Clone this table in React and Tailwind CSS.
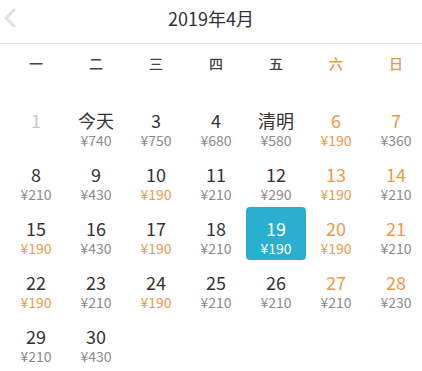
import React from 'react';

const ORANGE = 'text-[#eb9a4c]';

const days = [
  { d: '1', disabled: true },
  { d: '今天', p: 740 },
  { d: '3', p: 750 },
  { d: '4', p: 680 },
  { d: '清明', p: 580 },
  { d: '6', p: 190 },
  { d: '7', p: 360 },
  { d: '8', p: 210 },
  { d: '9', p: 430 },
  { d: '10', p: 190 },
  { d: '11', p: 210 },
  { d: '12', p: 290 },
  { d: '13', p: 190 },
  { d: '14', p: 210 },
  { d: '15', p: 190 },
  { d: '16', p: 430 },
  { d: '17', p: 190 },
  { d: '18', p: 210 },
  { d: '19', p: 190, selected: true },
  { d: '20', p: 190 },
  { d: '21', p: 210 },
  { d: '22', p: 190 },
  { d: '23', p: 210 },
  { d: '24', p: 190 },
  { d: '25', p: 210 },
  { d: '26', p: 210 },
  { d: '27', p: 210 },
  { d: '28', p: 230 },
  { d: '29', p: 210 },
  { d: '30', p: 430 },
];

const weekdays = ['一', '二', '三', '四', '五', '六', '日'];

const DayCell = ({ day, index }) => {
  const weekend = index % 7 >= 5;
  if (day.selected) {
    return (
      <div className="h-[53px] rounded-[4px] bg-[#2aafd1] flex flex-col items-center pt-[10px] text-white">
        <span className="text-[18px] leading-[22px]">{day.d}</span>
        <span className="text-[14px] leading-[18px]">¥{day.p}</span>
      </div>
    );
  }
  const numColor = day.disabled ? 'text-[#c8c8c8]' : weekend ? ORANGE : 'text-[#333333]';
  const priceColor = day.p === 190 ? ORANGE : 'text-[#8a8a8a]';
  return (
    <div className="h-[53px] flex flex-col items-center pt-[10px]">
      <span className={`text-[18px] leading-[22px] ${numColor}`}>{day.d}</span>
      {day.p && <span className={`text-[14px] leading-[18px] ${priceColor}`}>¥{day.p}</span>}
    </div>
  );
};

export default function App() {
  return (
    <div
      className="w-[422px] h-[371px] bg-white overflow-hidden"
      style={{ fontFamily: '"Noto Sans CJK SC", sans-serif' }}
    >
      {/* Header */}
      <div className="relative h-[44px] border-b border-[#e3e3e3] flex items-center justify-center">
        <svg className="absolute left-[2px] top-[7px]" width="16" height="22" viewBox="0 0 16 22">
          <polyline points="13,2 4,11 13,20" fill="none" stroke="#e2e2e2" strokeWidth="3" />
        </svg>
        <span className="text-[18px] text-[#333333] leading-none -mt-[7px]">2019年4月</span>
      </div>

      {/* Weekdays */}
      <div className="pl-[6px] grid grid-cols-[repeat(7,60px)] h-[38px] items-center">
        {weekdays.map((w, i) => (
          <div
            key={w}
            className={`text-center text-[14px] font-medium leading-none ${i >= 5 ? 'text-[#e39a46]' : 'text-[#444444]'}`}
          >
            {w}
          </div>
        ))}
      </div>

      {/* Days */}
      <div className="pl-[6px] mt-[17px] grid grid-cols-[repeat(7,60px)] gap-y-[1px]">
        {days.map((day, i) => (
          <DayCell key={i} day={day} index={i} />
        ))}
      </div>
    </div>
  );
}
